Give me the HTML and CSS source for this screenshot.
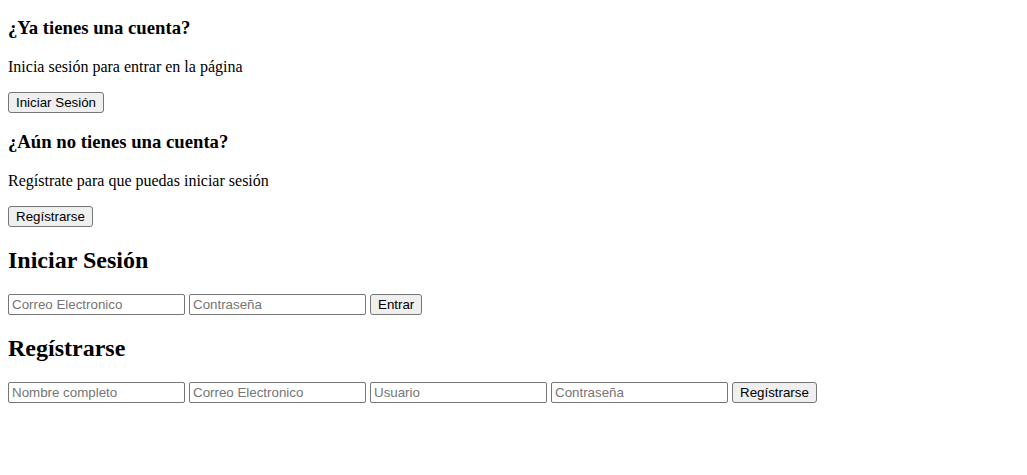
FILE: index.html
```html
<!DOCTYPE html>
<html lang="es">
<head>
  <meta charset="UTF-8" />
  <meta name="viewport" content="width=device-width, initial-scale=1.0" />
  <title>Cuenta</title>
  <link rel="stylesheet" href="styles.css">
</head>
<body>
  <h3>¿Ya tienes una cuenta?</h3>
  <p>Inicia sesión para entrar en la página</p>
  <button class="btn">Iniciar Sesión</button>

  <h3>¿Aún no tienes una cuenta?</h3>
  <p>Regístrate para que puedas iniciar sesión</p>
  <button class="btn">Regístrarse</button>

  <!-- Iniciar sesión -->
  <h2>Iniciar Sesión</h2>
  <form class="form">
    <input class="field" type="email" placeholder="Correo Electronico" />
    <input class="field" type="password" placeholder="Contraseña" />
    <button class="btn" type="button">Entrar</button>
  </form>

  <!-- Registro -->
  <h2>Regístrarse</h2>
  <form class="form">
    <input class="field" type="text" placeholder="Nombre completo" />
    <input class="field" type="email" placeholder="Correo Electronico" />
    <input class="field" type="text" placeholder="Usuario" />
    <input class="field" type="password" placeholder="Contraseña" />
    <button class="btn" type="button">Regístrarse</button>
  </form>
</body>
</html>
```

FILE: styles.css
```css
body {
  font-family: "Liberation Serif", "Times New Roman", serif;
  background: white;
  color: black;
  margin: 0 8px 8px;
}

h3 {
  font-size: 18.72px;
  margin: 18.72px 0;
}

h3:first-child {
  margin-top: 17px;
}

h2 {
  font-size: 24px;
  margin: 19.5px 0 20.5px;
}

p {
  font-size: 16px;
  margin: 16px 0;
}

.form {
  margin: 0;
}

.field {
  font-family: "Liberation Sans", Arial, sans-serif;
  font-size: 13.33px;
  box-sizing: border-box;
  width: 177px;
  height: 21px;
  padding: 1px 3px;
  border: 1px solid #767676;
  border-radius: 2px;
  background: white;
  color: black;
  margin: 0;
}

.field::placeholder {
  color: #757575;
}

.btn {
  font-family: "Liberation Sans", Arial, sans-serif;
  font-size: 13.33px;
  height: 21px;
  padding: 1px 7px;
  border: 1px solid #767676;
  border-radius: 3px;
  background: #efefef;
  color: black;
  margin: 0;
}
```
